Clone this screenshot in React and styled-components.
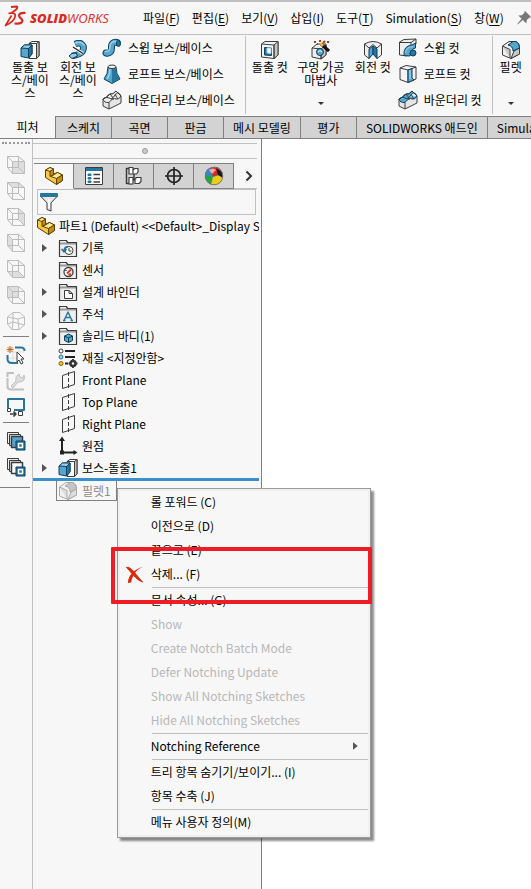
import React from "react";
import styled, { createGlobalStyle, css } from "styled-components";

const c = {
  bg: "#f7f7f7",
  line: "#c0c0c0",
  edge: "#808080",
  tab: "#d3d3d3",
  text: "#000",
  muted: "#b8b8b8",
  blue: "#3a90c8",
};

const Global = createGlobalStyle`
  * { box-sizing: border-box; }
  body { margin: 0; background: #fff; }
  button, input { font: inherit; color: inherit; margin: 0; }
  button { cursor: default; }
`;

const Page = styled.div`
  min-height: 100vh;
  display: flex;
  flex-direction: column;
  overflow: hidden;
  font: 12px/16px "Noto Sans CJK KR", "Noto Sans", sans-serif;
  color: ${c.text};
`;

const plain = css`
  border: 0;
  padding: 0;
  background: none;
`;

const MenuBar = styled.header`
  display: flex;
  align-items: center;
  height: 35px;
  padding-left: 4px;
  background: ${c.bg};
  border-top: 2px solid ${c.line};
  border-bottom: 1px solid ${c.line};
  white-space: nowrap;
  overflow: hidden;
`;

const Brand = styled.div`
  display: flex;
  align-items: center;
  flex: none;
  width: 139px;
  gap: 4px;
  color: #da2a1f;
  font: italic 400 13px/18px "Open Sans", sans-serif;
  b { font-weight: 800; }
`;

const MenuNav = styled.nav`
  display: flex;
  flex: none;
  gap: 12px;
`;

const MenuButton = styled.button`
  ${plain}
  flex: none;
  u { text-underline-offset: 2px; }
`;

const PinButton = styled.button`
  ${plain}
  flex: none;
  display: flex;
  margin-left: 12px;
`;

const Ribbon = styled.section`
  display: flex;
  flex: none;
  height: 81px;
  padding: 1px 0 2px 6px;
  background: ${c.bg};
  overflow: hidden;
`;

const RibbonGroup = styled.div`
  display: flex;
  flex: none;
  padding-right: 10px;
  border-right: 1px solid ${c.line};
`;

const BigButton = styled.button`
  ${plain}
  display: flex;
  flex-direction: column;
  align-items: center;
  flex: none;
  width: ${(p) => p.$width}px;
  padding-top: 4px;
  line-height: 13px;
  text-align: center;
  white-space: pre-line;
`;

const DropMark = styled.span`
  margin-top: auto;
  margin-bottom: 9px;
  border: 3px solid transparent;
  border-top-color: #333;
  border-bottom: 0;
`;

const SmallColumn = styled.div`
  display: flex;
  flex-direction: column;
`;

const SmallButton = styled.button`
  ${plain}
  display: flex;
  align-items: center;
  gap: 6px;
  height: 26px;
  padding-bottom: 2px;
  white-space: nowrap;
`;

const TabBar = styled.div`
  display: flex;
  flex: none;
  height: 23px;
  background: ${c.bg};
  border-bottom: 1px solid ${c.edge};
  overflow: hidden;
`;

const CommandTab = styled.button`
  flex: none;
  min-width: 56px;
  padding: 0 9px;
  border: 0 solid ${c.edge};
  white-space: nowrap;
  ${(p) =>
    p["aria-selected"]
      ? css`min-width: 55px; background: ${c.bg};`
      : css`border-width: 1px 0 0 1px; background: ${c.tab};`}
`;

const Workspace = styled.div`
  display: flex;
  flex: 1;
`;

const ViewBar = styled.aside`
  display: flex;
  flex-direction: column;
  align-items: center;
  flex: none;
  width: 33px;
  padding-top: 3px;
  background: ${c.bg};
  border-right: 1px solid ${c.line};
`;

const Grip = styled.div`
  width: 28px;
  margin-bottom: 8px;
  border-top: 2px dotted #999;
`;

const ToolButton = styled.button`
  ${plain}
  display: flex;
  align-items: center;
  justify-content: center;
  width: 26px;
  height: 26px;
`;

const ToolRule = styled.div`
  width: 26px;
  margin: 2px 0 5px;
  border-top: 1px solid ${c.edge};
`;

const ToolEnd = styled.div`
  width: 30px;
  height: 8px;
  align-self: flex-start;
  border-bottom: 1px solid ${c.edge};
`;

const TreePanel = styled.section`
  display: flex;
  flex-direction: column;
  flex: none;
  width: 229px;
  background: ${c.bg};
  border-right: 1px solid ${c.edge};
`;

const Splitter = styled.div`
  display: flex;
  justify-content: center;
  align-items: center;
  height: 16px;
  margin: 4px 4px 4px 0;
  border: 1px solid ${c.line};
  border-width: 1px 0;
`;

const Knob = styled.i`
  width: 6px;
  height: 6px;
  border: 1px solid #999;
  border-radius: 50%;
  background: #ccc;
`;

const PanelTabs = styled.div`
  display: flex;
  height: 26px;
  margin: 0 4px 0 1px;
`;

const PanelTab = styled.button`
  display: flex;
  align-items: center;
  justify-content: center;
  width: 40px;
  padding: 0;
  border: 1px solid ${c.edge};
  border-width: 1px 1px 1px 0;
  background: ${c.tab};
  ${(p) => p["aria-selected"] && css`background: ${c.bg}; border-bottom-color: ${c.bg};`}
`;

const MoreTabs = styled.button`
  ${plain}
  display: flex;
  align-items: center;
  justify-content: center;
  flex: 1;
  padding-left: 6px;
  border-bottom: 1px solid ${c.line};
`;

const FilterBox = styled.label`
  display: flex;
  align-items: center;
  height: 26px;
  margin: 0 5px 0 4px;
  padding-left: 1px;
  border: 1px solid ${c.line};
  input {
    flex: 1;
    min-width: 0;
    border: 0;
    outline: 0;
    background: none;
  }
`;

const Tree = styled.ul`
  margin: 0;
  padding: 0 2px 0 0;
  list-style: none;
`;

const TreeRow = styled.li`
  display: flex;
  align-items: center;
  gap: ${(p) => (p.$root ? 3 : 4)}px;
  height: 22px;
  padding-left: ${(p) => (p.$root ? 3 : 9)}px;
  white-space: nowrap;
`;

const TreeLabel = styled.span`
  flex: 1;
  min-width: 0;
  overflow: hidden;
`;

const Twisty = styled.span`
  flex: none;
  width: 12px;
  height: 8px;
  &::before {
    content: "";
    display: ${(p) => (p.$open ? "block" : "none")};
    width: 5px;
    height: 8px;
    background: #555;
    clip-path: polygon(0 0, 100% 50%, 0 100%);
  }
`;

const RollbackBar = styled.li`
  height: 3px;
  margin-top: -1px;
  background: ${c.blue};
`;

const PickedRow = styled.li`
  display: flex;
  padding-left: 23px;
`;

const PickedNode = styled.div`
  position: relative;
  display: flex;
  align-items: center;
  gap: 4px;
  height: 20px;
  padding: 0 5px 0 1px;
  border: 1px solid ${c.edge};
  border-top: 0;
  color: #8c8c8c;
  white-space: nowrap;
`;

const Canvas = styled.main`
  flex: 1;
  min-width: 0;
  background: #fff;
`;

const ContextMenu = styled.div`
  position: absolute;
  z-index: 1;
  left: 100%;
  top: 7px;
  width: 254px;
  margin-left: 1px;
  padding: 1px 2px 3px;
  border: 1px solid #999;
  background: ${c.bg};
  box-shadow: inset 0 0 0 2px #f0f0f0, 3px 3px 2px rgba(0, 0, 0, 0.45);
  color: ${c.text};
`;

const MenuItem = styled.button`
  ${plain}
  display: flex;
  align-items: center;
  position: relative;
  width: 100%;
  height: 24px;
  padding-right: 10px;
  white-space: nowrap;
  &:disabled { color: ${c.muted}; }
`;

const IconCell = styled.span`
  display: flex;
  flex: none;
  width: 31px;
  padding-left: 5px;
`;

const ItemText = styled.span`
  flex: 1;
  text-align: left;
`;

const MenuRule = styled.div`
  height: 2px;
  margin-left: 32px;
  border-bottom: 1px solid ${c.line};
`;

const Highlight = styled.span`
  position: absolute;
  inset: -15px -4px -18px -9px;
  z-index: 2;
  border: 4px solid #ee1c25;
  border-radius: 1px;
  pointer-events: none;
`;

const INK = "#3c3c3c";
const NAVY = "#0d3f5e";
const B1 = "#9bd0e8";
const B2 = "#56a5cb";
const B3 = "#27769f";

const Icon = ({ size = 20, children, ...rest }) => (
  <svg
    width={size}
    height={size}
    viewBox="0 0 20 20"
    fill="none"
    stroke={INK}
    strokeLinejoin="round"
    aria-hidden="true"
    {...rest}
  >
    {children}
  </svg>
);

const DassaultMark = () => (
  <svg width="22" height="26" viewBox="0 0 22 26" fill="none" stroke="#da2a1f" strokeLinejoin="round" aria-hidden="true">
    <path d="M7 2 13 1.500Q14 2 12.500 4.300L7.500 8" strokeWidth="1.800" />
    <path d="M4.500 8.300Q12.500 7 11 12 9.500 17 1.500 20.500L7.500 10.500" strokeWidth="1.700" />
    <path d="M21.500 8Q15.500 7.500 15 10.500 15 12 17 13.500 19.500 15.500 17.500 17.500 15.500 19 10.500 18.500" strokeWidth="2.200" />
  </svg>
);

const Pin = () => (
  <Icon size={16} stroke="none">
    <path d="M11 1 19 9 16.500 9.600 13.500 12.500 13 17 8.500 12.500 2 18 1.500 17.500 7 11 3 6.800 7.500 6.500 10.500 3.500Z" fill="#777" />
  </Icon>
);

const ExtrudeBoss = () => (
  <Icon>
    <path d="M9 3.500 12 1.500H19V16L16 18.500H9Z" fill="#fff" />
    <path d="M16.500 3.500 19 1.500V16L16.500 18.500Z" fill="#c4c4c4" />
    <path d="M9 3.500H16.500V18.500" />
    <path d="M1 8 4.500 5H12V14L8.500 18 1 16.500Z" fill={B2} stroke={NAVY} />
    <path d="M1 8 4.500 5H12L8.500 8.500Z" fill={B1} stroke={NAVY} />
    <path d="M8.500 8.500 12 5V14L8.500 18Z" fill={B3} stroke={NAVY} />
  </Icon>
);

const RevolveBoss = () => (
  <Icon>
    <path d="M7 4Q13 1.500 15.500 6.500 16.500 14 4 16" stroke={NAVY} strokeWidth="6.500" />
    <path d="M7.300 3.900Q13 1.500 15.500 6.500 16.500 14 4.500 15.900" stroke={B2} strokeWidth="4.700" />
    <path d="M7 3Q14 .5 16.500 6" stroke={B1} strokeWidth="1.500" />
    <path d="M4 13.500 8 13 9.500 16 4 18.500 1 16Z" fill={B1} stroke={NAVY} />
    <path d="M5 7 15 13.500" stroke="#fff" strokeWidth="3" />
    <path d="M5 7 15 13.500" stroke="#222" strokeWidth="1.300" />
  </Icon>
);

const SweepBoss = () => (
  <Icon>
    <path d="M4 15Q10 16 9.500 9 9.500 3.500 15 4.500" stroke={NAVY} strokeWidth="7" strokeLinecap="round" />
    <path d="M4 15Q10 16 9.500 9 9.500 3.500 15 4.500" stroke={B2} strokeWidth="5" strokeLinecap="round" />
    <path d="M3 13.500Q8 14 8 9 8 3 14 3.500" stroke={B1} strokeWidth="1.500" />
    <ellipse cx="16.500" cy="5.500" rx="2" ry="3" fill={B3} stroke={NAVY} />
  </Icon>
);

const LoftBoss = () => (
  <Icon>
    <path d="M6 3Q6 10 2 15L10 19.500 18 15Q14 10 14 3Z" fill={B2} stroke={NAVY} />
    <path d="M10 4V19L17.500 15Q14 10 13.500 3Z" fill={B3} stroke="none" />
    <path d="M8 5Q8 11 5 15" stroke={B1} strokeWidth="1.500" />
    <ellipse cx="10" cy="2.800" rx="4" ry="1.800" fill="#eee" />
  </Icon>
);

const Boundary = ({ top = "#eee" }) => (
  <Icon>
    <path d="M1 9V16L7 19 19 13V6L14 1Q11 5 8 4Q5 5 5 7Z" fill="#e6e6e6" />
    <path d="M1 9Q4 6 7 8T13 5 19 6L14 1Q11 5 8 4Q6 7 1 9ZM1 9Q2 13 7 12.500 11 7 14 9 17 10 19 6" fill={top} stroke={top === "#eee" ? INK : NAVY} />
    <path d="M7 12.500V19M8 4Q12 8 11 10M13 4Q15 8 16 9" />
  </Icon>
);

const box = (
  <>
    <path d="M1.500 6 7 1.500H18.500V14L13 18.500 1.500 17Z" fill="#f4f4f4" />
    <path d="M13 6.500 18.500 1.500V14L13 18.500Z" fill="#c8c8c8" />
    <path d="M1.500 6 13 6.500V18.500" />
  </>
);

const ExtrudeCut = () => (
  <Icon>
    <path d="M1.500 4 5 1.500H18V15L14 18.500 1.500 17Z" fill="#f4f4f4" />
    <path d="M14 5 18 1.500V15L14 18.500Z" fill="#c8c8c8" />
    <path d="M1.500 4 14 5V18.500" />
    <path d="M4.500 7.500 11.500 8V15.500L4.500 15Z" fill={B3} stroke={NAVY} />
    <path d="M7 8V13L11 13.500V8Z" fill="#fff" stroke={B1} />
  </Icon>
);

const HoleWizard = () => (
  <Icon>
    <path d="M1 8 6 4H15V15L10 19 1 17Z" fill="#eee" />
    <path d="M10 9 15 5V15L10 19Z" fill="#c8c8c8" />
    <path d="M1 8 10 9V19" />
    <circle cx="9" cy="12" r="3.500" fill={B2} stroke={NAVY} />
    <path d="M7 12Q9 9 11 12" stroke="#fff" />
    <path d="M10 4 18 11" stroke="#111" strokeWidth="3" />
    <path d="M9.500 3.500 12 6" stroke="#f2b233" strokeWidth="3" />
    <path d="M3 2H5M8 1H10M12 3 14 1M16 2H18M6 4H7" stroke="#b33b10" strokeWidth="2" />
  </Icon>
);

const RevolveCut = () => (
  <Icon>
    <path d="M1.500 4Q10-1 18.500 4V15L14 18.500 10 12 6 18.500 1.500 15Z" fill="#eee" />
    <path d="M10 6V14L6 18.500V9Z" fill={B2} stroke={NAVY} />
    <path d="M10 6V14L14 18.500V9Z" fill={B3} stroke={NAVY} />
    <path d="M1.500 4 6 8 10 4.500 14 8 18.500 4" />
  </Icon>
);

const SweepCut = () => (
  <Icon>
    <path d="M1.500 4 6 1.500 18 1V6L14 8 9 18 1.500 17Z" fill="#eee" />
    <path d="M1.500 4.500H13L18 1M13 4.500V7" />
    <path d="M6 17.500Q5 8 14 7L17.500 5V10Q12 11 12 18Z" fill={B2} stroke={NAVY} />
    <path d="M7.500 15Q8 9 15 8.500" stroke={B1} />
    <ellipse cx="15" cy="15" rx="3" ry="3" fill={B3} stroke={NAVY} />
  </Icon>
);

const LoftCut = () => (
  <Icon>
    <path d="M2 4 8 1.500 18 3V15L10 18.500 2 15.500Z" fill="#f4f4f4" />
    <path d="M2 4 10 6 18 3M10 6V18.500" />
    <path d="M10 6 14 4.500V14L16 16 10 18.500Z" fill={B2} stroke={NAVY} />
    <path d="M12 6V15" stroke={B1} strokeWidth="1.500" />
  </Icon>
);

const Fillet = ({ pale }) => (
  <Icon stroke={pale ? "#aaa" : INK}>
    <path d="M1.500 6 8 1.500H15Q18.500 3 18.500 7V14L10 18.500 1.500 15Z" fill={pale ? "#f2f2f2" : "#eee"} />
    <path d="M1.500 6 9 9.500V18M18.500 8 13 11 10 18.500 18.500 14Z" fill={pale ? "#ddd" : "#c8c8c8"} />
    <path d="M7 5 12 1.500H15Q18.500 3 18.500 8L12 11Q12 6 7 5Z" fill={pale ? "#c4c4c4" : B2} stroke={pale ? "#aaa" : NAVY} />
  </Icon>
);

const faces = {
  front: "M7 7H18V18H7Z",
  top: "M2 2H13L18 7H7Z",
  right: "M13 2 18 7V18L13 13Z",
  left: "M2 2 7 7V18L2 13Z",
  bottom: "M2 13H13L18 18H7Z",
  back: "M2 2H13V13H2Z",
};

const ViewCube = ({ face }) => (
  <Icon stroke="#bcbcbc">
    <path d={faces[face]} fill="#dedede" stroke="none" />
    <path d="M1.500 1.500H12.500V12.500H1.500ZM6.500 6.500H18.500V18.500H6.500ZM1.500 1.500 6.500 6.500M12.500 1.500 18.500 6.500M12.500 12.500 18.500 18.500M1.500 12.500 6.500 18.500" />
  </Icon>
);

const IsoCube = () => (
  <Icon stroke="#bcbcbc">
    <path d="M7 1.500H14L18.500 6V14L13 18.500H6L1.500 13V6ZM1.500 6 12 8 18.500 6M12 8 13 18.500M7 1.500V11L1.500 13M7 11 18.500 14M7 11 6 18.500" />
  </Icon>
);

const SketchTool = () => (
  <Icon>
    <path d="M7 2V18M13 2V18M2 7H18M2 13H18" stroke="#ddd" />
    <path d="M9 2.500H15Q18.500 2.500 18.500 6M1.500 10V14Q1.500 18 6 18H12" stroke={B3} strokeWidth="2" />
    <path d="M4 1V8M.5 4.500H7.500M1.500 2 6.500 7M6.500 2 1.500 7" stroke="#c46a12" />
    <path d="M11 7V17L13 15 15 19 17 18 15 14H18Z" fill="#fff" />
  </Icon>
);

const WrenchTool = () => (
  <Icon stroke="#c0c0c0">
    <path d="M1.500 6V2H8M1.500 7V16Q2 18.500 5 18.500H18" strokeWidth="2" />
    <path d="M5 15 10 10Q9 5 13 3L14 6 17 7 18 4Q20 10 14 11L12 11 7 17Z" fill="#ddd" />
  </Icon>
);

const ScreenTool = () => (
  <Icon>
    <path d="M2 11V2H18V13H8" stroke={B3} strokeWidth="2" />
    <path d="M1.500 11.500H4.500V14.500H1.500ZM12.500 14.500H16.500V18.500H12.500Z" fill="#fff" />
    <path d="M4 17H10M7.500 14.500 10 17 7.500 19.500" strokeWidth="1.500" />
  </Icon>
);

const LayersTool = ({ fill }) => (
  <Icon>
    <path d="M1.500 1.500H12.500V12.500H1.500Z" fill="#eee" />
    <path d="M3.500 3.500H14.500V14.500H3.500Z" fill="#ddd" />
    <path d="M5.500 5.500H16.500V16.500H5.500Z" fill={fill} strokeWidth="1.500" />
    <path d="M10 10H19V19H10Z" fill={B3} stroke={NAVY} />
    <path d="M12.500 12.500H16.500V16.500H12.500Z" fill={B3} stroke="#fff" strokeWidth="1.500" />
  </Icon>
);

const PartIcon = () => (
  <Icon stroke="#5e4300">
    <path d="M1.500 4 6 1.500 9.500 3V8L13.500 6.500 18.500 9V14.500L12.500 18.500 1.500 11.500Z" fill="#f5c945" />
    <path d="M1.500 4 6 1.500 9.500 3 6 5.500ZM7 10.500 13.500 6.500 18.500 9 12.500 12.500Z" fill="#ffe894" />
    <path d="M6 5.500 9.500 3V8.500L6 10.500ZM12.500 12.500 18.500 9V14.500L12.500 18.500Z" fill="#c88e12" />
  </Icon>
);

const PropertyIcon = () => (
  <Icon>
    <path d="M1.500 1.500H18.500V18.500H1.500Z" fill="#fff" />
    <path d="M2 2H18V5H2Z" fill={B3} stroke="none" />
    <path d="M4 8H7V9.500H4ZM4 11.500H7V13H4ZM4 15H7V16.500H4Z" fill={B3} stroke={B3} />
    <path d="M9.500 8.500H16M9.500 12.500H16M9.500 16H16" strokeWidth="1.500" />
  </Icon>
);

const ConfigIcon = () => (
  <Icon>
    <path d="M2.500 2V18M2.500 2.500H8M2.500 17.500H8M8 6H10M10 6V14M8 14H12" strokeWidth="1.500" />
    <path d="M5 1.500H9V8H5ZM9 4 11 2.500H14V6L12.500 8H9ZM5 11.500H9V18H5ZM11 13 12.500 11.500H17V15.500L15 17.500H11Z" fill="#fff" strokeWidth="1.200" />
  </Icon>
);

const TargetIcon = () => (
  <Icon stroke="#222">
    <circle cx="10" cy="10" r="6.500" strokeWidth="1.700" />
    <path d="M10 1V19M1 10H19" strokeWidth="1.700" />
  </Icon>
);

const AppearanceIcon = () => (
  <Icon stroke="none">
    <circle cx="10" cy="10" r="9" fill="#2c6fd0" />
    <path d="M7 1.500Q15-1 18 6L9 11 5 6Z" fill="#d8281f" />
    <path d="M1.500 7 5 5 10 11 7 18.500Q0 15 1.500 7Z" fill="#27a243" />
    <path d="M9 11 18.500 8Q20 15 14 18.500 10 20 7 18.500Z" fill="#f0cb1d" />
    <path d="M1.500 7Q2 3 6 2L7 9 3 10Z" fill="#3b7fe0" />
    <path d="M12 2 18 6 19 12 14 9Z" fill="#191919" />
    <path d="M5 4Q9 1 12 4L8 8Z" fill="#fff" opacity=".6" />
    <circle cx="10" cy="10" r="8.800" stroke="#777" />
  </Icon>
);

const FilterIcon = () => (
  <Icon>
    <path d="M1.500 4 8 11V17.500L12 19V11L18.500 4Z" fill="#e9e9e9" />
    <path d="M1.500 1.500H18.500V4.500H1.500Z" fill={B3} stroke={B3} />
    <path d="M10 7V16" stroke="#fff" strokeWidth="2" />
  </Icon>
);

const Folder = ({ children }) => (
  <Icon>
    <path d="M1.500 18.500V2.500H8.500L9.500 5H18.500V18.500Z" fill="#eee" />
    <path d="M2 5.500H18.500" stroke="#999" strokeWidth="2" />
    <path d="M1.500 18.500V2.500H8.500L9.500 4.500H18.500V18.500Z" strokeWidth="1.200" />
    {children}
  </Icon>
);

const folderMarks = {
  history: (
    <>
      <circle cx="11" cy="12.500" r="4" fill="#fff" />
      <path d="M3.500 11 6 14 8.500 11M6 13Q6 9 10 8.500" stroke={B3} strokeWidth="1.500" />
      <path d="M11 10V13H13.500" />
    </>
  ),
  sensor: (
    <>
      <circle cx="10.500" cy="12" r="4.500" fill="#fff" strokeWidth="1.300" />
      <path d="M9 13.500 13 9.500" stroke="#d43b20" strokeWidth="2" />
      <path d="M8 10V11" stroke={B3} strokeWidth="2" />
      <path d="M10.500 15 13 14" stroke="#d43b20" strokeWidth="2" />
    </>
  ),
  binder: <path d="M6.500 8.500H11L14.500 11.500V16.500H6.500ZM11 8.500V11.500H14.500" fill="#fff" />,
  note: <path d="M6 16.500 10 8 14 16.500M7.500 13.500H12.500M5 16.500H7.500M12.500 16.500H15" stroke={B3} strokeWidth="1.400" />,
  solid: (
    <>
      <path d="M6.500 10 10.500 8 14.500 10V14.500L10.500 16.500 6.500 14.500Z" fill={B2} stroke={NAVY} />
      <path d="M6.500 10 10.500 12 14.500 10M10.500 12V16.500" stroke={NAVY} />
    </>
  ),
};

const MaterialIcon = () => (
  <Icon>
    <circle cx="3" cy="3" r="2" fill="#fff" />
    <circle cx="3" cy="9" r="2" fill={B1} stroke={B3} />
    <circle cx="3" cy="15.500" r="2" fill="#f5c21b" stroke="#8a6400" />
    <path d="M7 3H17M7 9H17M7 15.500H10" stroke="#222" strokeWidth="2" />
    <circle cx="15" cy="15.500" r="2.500" stroke="#333" strokeWidth="2.500" />
    <path d="M15 11V13M15 18V20M10.500 15.500H12M18 15.500H19.500" strokeWidth="2" />
  </Icon>
);

const PlaneIcon = () => (
  <Icon>
    <path d="M4.500 5.500 16.500 1.500V14.500L4.500 18.500Z" />
    <path d="M10.500 2V18" strokeDasharray="4 2" />
  </Icon>
);

const OriginIcon = () => (
  <Icon stroke="#222">
    <path d="M4 3V16.500H17" strokeWidth="2" />
    <path d="M4 .5 1 5H7ZM19.500 16.500 15.500 14V19ZM2 14.500H6V18.500H2Z" fill="#222" stroke="none" />
  </Icon>
);

const DeleteIcon = () => (
  <Icon size={19} stroke="none">
    <path d="M1.500 2.500Q5 1.500 10 8 15 14 18.500 18Q13 16 9 11 4 5 1.500 2.500Z" fill="#dc2a0c" stroke="#dc2a0c" />
    <path d="M18.500 2Q12 4.500 9 11 7 14 6.500 18.500L3 19Q3 13 8 8 13 3 18.500 2Z" fill="#dc2a0c" />
  </Icon>
);

const Chevron = () => (
  <svg width="8" height="12" viewBox="0 0 8 12" fill="none" stroke="#333" strokeWidth="2" aria-hidden="true">
    <path d="M1.500 1.500 6 6 1.500 10.500" />
  </svg>
);

const menus = [["파일", "F"], ["편집", "E"], ["보기", "V"], ["삽입", "I"], ["도구", "T"], ["Simulation", "S"], ["창", "W"]];
const commandTabs = ["피처", "스케치", "곡면", "판금", "메시 모델링", "평가", "SOLIDWORKS 애드인", "Simulation"];
const panelTabs = [
  ["피처 트리", <PartIcon />],
  ["속성", <PropertyIcon />],
  ["설정", <ConfigIcon />],
  ["치수", <TargetIcon />],
  ["표현", <AppearanceIcon />],
];
const treeRows = [
  ["기록", <Folder>{folderMarks.history}</Folder>, true],
  ["센서", <Folder>{folderMarks.sensor}</Folder>],
  ["설계 바인더", <Folder>{folderMarks.binder}</Folder>, true],
  ["주석", <Folder>{folderMarks.note}</Folder>, true],
  ["솔리드 바디(1)", <Folder>{folderMarks.solid}</Folder>, true],
  ["재질 <지정안함>", <MaterialIcon />],
  ["Front Plane", <PlaneIcon />],
  ["Top Plane", <PlaneIcon />],
  ["Right Plane", <PlaneIcon />],
  ["원점", <OriginIcon />],
  ["보스-돌출1", <ExtrudeBoss />, true],
];
const contextItems = [
  { text: "롤 포워드 (C)" },
  { text: "이전으로 (D)" },
  { text: "끝으로 (E)" },
  { text: "삭제... (F)", icon: <DeleteIcon />, marked: true },
  null,
  { text: "문서 속성... (G)" },
  { text: "Show", off: true },
  { text: "Create Notch Batch Mode", off: true },
  { text: "Defer Notching Update", off: true },
  { text: "Show All Notching Sketches", off: true },
  { text: "Hide All Notching Sketches", off: true },
  null,
  { text: "Notching Reference", sub: true },
  null,
  { text: "트리 항목 숨기기/보이기... (I)" },
  { text: "항목 수축 (J)" },
  null,
  { text: "메뉴 사용자 정의(M)" },
];

const SubMark = styled.i`
  width: 5px;
  height: 8px;
  background: #555;
  clip-path: polygon(0 0, 100% 50%, 0 100%);
`;

const Small = ({ icon, children }) => (
  <SmallButton>
    {icon}
    {children}
  </SmallButton>
);

export default function App() {
  return (
    <Page>
      <Global />
      <MenuBar>
        <Brand>
          <DassaultMark />
          <span><b>SOLID</b>WORKS</span>
        </Brand>
        <MenuNav>
          {menus.map(([name, key]) => (
            <MenuButton key={key}>{name}(<u>{key}</u>)</MenuButton>
          ))}
        </MenuNav>
        <PinButton aria-label="고정"><Pin /></PinButton>
      </MenuBar>

      <Ribbon>
        <RibbonGroup>
          <BigButton $width={48}><ExtrudeBoss />{"돌출 보\n스/베이\n스"}</BigButton>
          <BigButton $width={48}><RevolveBoss />{"회전 보\n스/베이\n스"}</BigButton>
          <SmallColumn>
            <Small icon={<SweepBoss />}>스윕 보스/베이스</Small>
            <Small icon={<LoftBoss />}>로프트 보스/베이스</Small>
            <Small icon={<Boundary />}>바운더리 보스/베이스</Small>
          </SmallColumn>
        </RibbonGroup>
        <RibbonGroup>
          <BigButton $width={48}><ExtrudeCut />돌출 컷</BigButton>
          <BigButton $width={54}><HoleWizard />{"구멍 가공\n마법사"}<DropMark /></BigButton>
          <BigButton $width={50}><RevolveCut />회전 컷</BigButton>
          <SmallColumn>
            <Small icon={<SweepCut />}>스윕 컷</Small>
            <Small icon={<LoftCut />}>로프트 컷</Small>
            <Small icon={<Boundary top={B2} />}>바운더리 컷</Small>
          </SmallColumn>
        </RibbonGroup>
        <BigButton $width={36}><Fillet />필렛<DropMark /></BigButton>
      </Ribbon>

      <TabBar role="tablist">
        {commandTabs.map((name, i) => (
          <CommandTab key={name} role="tab" aria-selected={i === 0}>{name}</CommandTab>
        ))}
      </TabBar>

      <Workspace>
        <ViewBar>
          <Grip />
          {Object.keys(faces).map((face) => (
            <ToolButton key={face} aria-label={face}><ViewCube face={face} /></ToolButton>
          ))}
          <ToolButton aria-label="isometric"><IsoCube /></ToolButton>
          <ToolRule />
          <ToolButton aria-label="sketch"><SketchTool /></ToolButton>
          <ToolButton aria-label="edit"><WrenchTool /></ToolButton>
          <ToolButton aria-label="screen"><ScreenTool /></ToolButton>
          <ToolRule />
          <ToolButton aria-label="bodies"><LayersTool fill={B2} /></ToolButton>
          <ToolButton aria-label="outlines"><LayersTool fill="#fff" /></ToolButton>
          <ToolEnd />
        </ViewBar>

        <TreePanel>
          <Splitter><Knob /></Splitter>
          <PanelTabs role="tablist">
            {panelTabs.map(([name, icon], i) => (
              <PanelTab key={name} role="tab" aria-label={name} aria-selected={i === 0}>{icon}</PanelTab>
            ))}
            <MoreTabs aria-label="더 보기"><Chevron /></MoreTabs>
          </PanelTabs>
          <FilterBox>
            <FilterIcon />
            <input type="text" aria-label="필터" />
          </FilterBox>
          <Tree>
            <TreeRow $root>
              <PartIcon />
              <TreeLabel>파트1 (Default) &lt;&lt;Default&gt;_Display State 1&gt;</TreeLabel>
            </TreeRow>
            {treeRows.map(([name, icon, open]) => (
              <TreeRow key={name}>
                <Twisty $open={open} />
                {icon}
                <TreeLabel>{name}</TreeLabel>
              </TreeRow>
            ))}
            <RollbackBar />
            <PickedRow>
              <PickedNode>
                <Fillet pale />
                필렛1
                <ContextMenu role="menu">
                  {contextItems.map((item, i) =>
                    item ? (
                      <MenuItem key={i} role="menuitem" disabled={item.off}>
                        <IconCell>{item.icon}</IconCell>
                        <ItemText>{item.text}</ItemText>
                        {item.sub && <SubMark />}
                        {item.marked && <Highlight />}
                      </MenuItem>
                    ) : (
                      <MenuRule key={i} role="separator" />
                    )
                  )}
                </ContextMenu>
              </PickedNode>
            </PickedRow>
          </Tree>
        </TreePanel>
        <Canvas />
      </Workspace>
    </Page>
  );
}
